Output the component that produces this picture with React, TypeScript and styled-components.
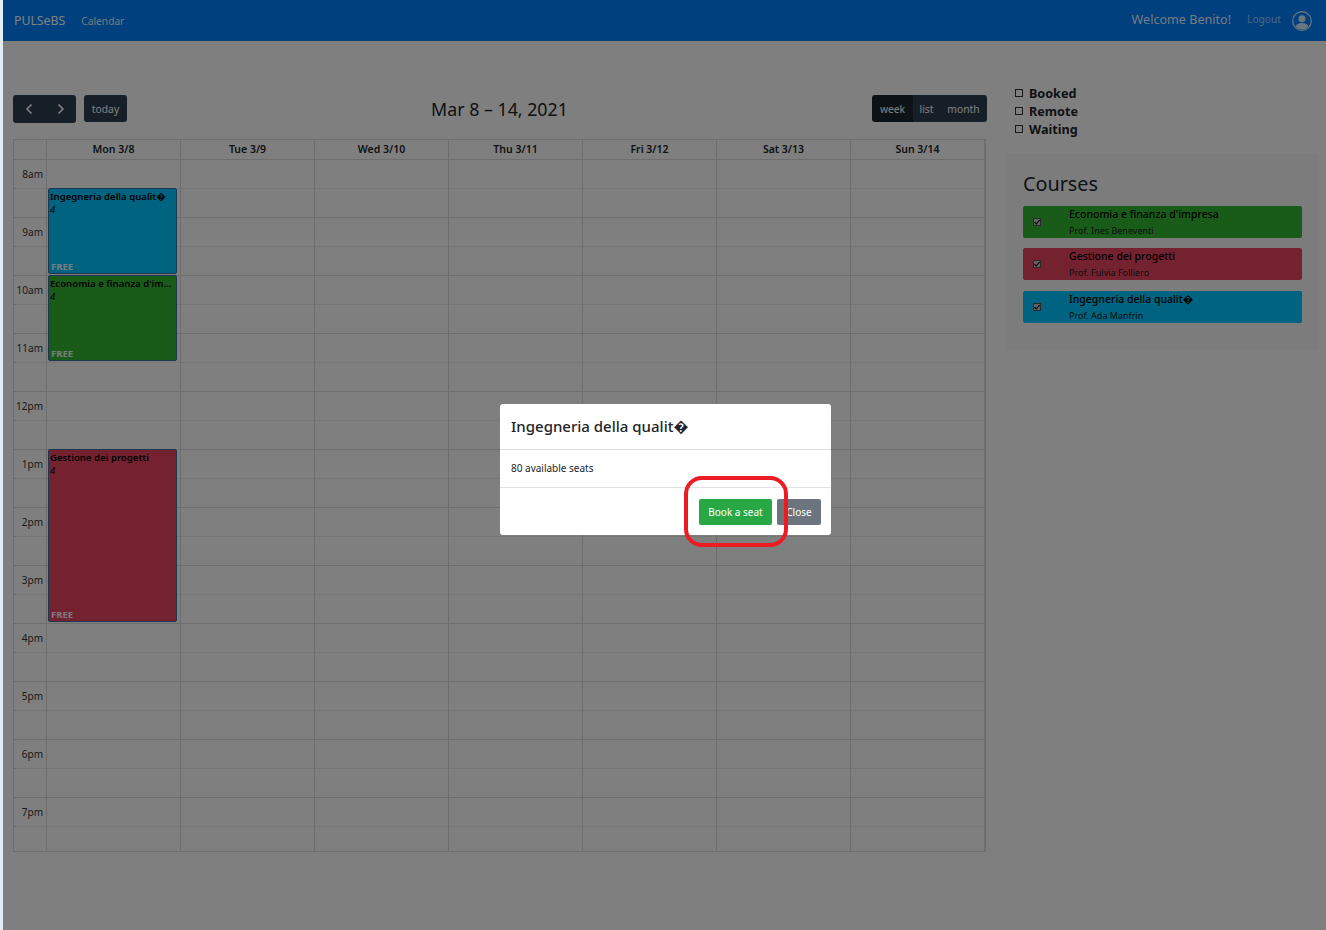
import React from "react";
import styled, { createGlobalStyle } from "styled-components";
import { ChevronLeft, ChevronRight } from "lucide-react";

const FONT = `"Noto Sans", "DejaVu Sans", sans-serif`;

const GlobalStyle = createGlobalStyle`
  html, body { margin: 0; padding: 0; height: 930px; overflow: hidden; }
  body { background: #e4edf6; font-family: ${FONT}; color: #212529; }
  * { box-sizing: border-box; }
`;

const Shell = styled.div`
  margin-left: 3px;
  height: 930px;
  background: #fff;
`;

const Navbar = styled.nav`
  height: 41px;
  background: #0080ff;
  display: flex;
  align-items: center;
  padding: 0 14px 0 11px;
`;

const Brand = styled.span`
  font-size: 12.3px;
  color: #fff;
  margin-right: 16px;
`;

const NavLink = styled.span`
  font-size: 10.2px;
  color: rgba(255, 255, 255, 0.95);
`;

const LogoutLink = styled(NavLink)`
  color: rgba(255, 255, 255, 0.6);
  margin-bottom: 3px;
`;

const NavRight = styled.div`
  margin-left: auto;
  display: flex;
  align-items: center;
`;

const Welcome = styled.span`
  font-size: 12.6px;
  color: rgba(255, 255, 255, 0.95);
  margin-right: 16px;
  margin-bottom: 2px;
`;

const Avatar = styled.svg`
  width: 20px;
  height: 20px;
  margin-left: 11px;
  display: block;
`;

const Main = styled.main`
  display: flex;
  padding: 54px 0 0 10px;
`;

const CalendarCol = styled.section`
  width: 973px;
`;

const Toolbar = styled.div`
  display: flex;
  justify-content: space-between;
  align-items: flex-start;
  margin-bottom: 16px;
  height: 28px;
`;

const ToolGroup = styled.div`
  display: flex;
  gap: 8px;
`;

const ButtonGroup = styled.div`
  display: flex;
  border-radius: 3px;
  overflow: hidden;
`;

const ViewGroup = styled(ButtonGroup)`
  margin-right: -1px;
`;

const ToolButton = styled.button<{ $active?: boolean; $w: number; $h?: number }>`
  width: ${(p) => p.$w}px;
  height: ${(p) => p.$h ?? 27}px;
  padding: 0;
  border: 0;
  border-radius: 0;
  background: ${(p) => (p.$active ? "#1a252f" : "#2c3e50")};
  color: #fff;
  font-family: ${FONT};
  font-size: 10.3px;
  display: flex;
  align-items: center;
  justify-content: center;
`;

const TodayButton = styled(ToolButton)`
  border-radius: 3px;
`;

const Title = styled.h2`
  margin: 1px 0 0;
  font-size: 17.8px;
  font-weight: 400;
  line-height: 26px;
  color: #212529;
`;

const Grid = styled.div`
  width: 973px;
  border: 1px solid #ddd;
  border-right-width: 2px;
`;

const HeaderRow = styled.div`
  display: grid;
  grid-template-columns: 32px repeat(7, 134px);
  height: 19px;
`;

const HeaderCell = styled.div`
  border-left: 1px solid #ddd;
  font-size: 10.5px;
  font-weight: 600;
  line-height: 19px;
  text-align: center;
  color: #212529;
  &:first-child { border-left: 0; }
`;

const TimeBody = styled.div`
  position: relative;
`;

const SlotRow = styled.div<{ $minor: boolean; $h: number }>`
  display: grid;
  grid-template-columns: 32px repeat(7, 134px);
  height: ${(p) => p.$h}px;
  border-top: 1px ${(p) => (p.$minor ? "dotted" : "solid")} #ddd;
`;

const AxisCell = styled.div`
  font-size: 10px;
  line-height: 29px;
  text-align: right;
  padding-right: 3px;
  color: #333;
`;

const DayCell = styled.div`
  border-left: 1px solid #ddd;
`;

const EventCard = styled.div<{ $color: string; $top: number; $h: number }>`
  position: absolute;
  left: 34px;
  top: ${(p) => p.$top}px;
  width: 129px;
  height: ${(p) => p.$h}px;
  background: ${(p) => p.$color};
  border: 1px solid #3a6ea5;
  border-radius: 2px;
  padding: 1px 1px 0 1px;
  color: #000;
  overflow: hidden;
`;

const EventName = styled.div`
  font-size: 9.6px;
  font-weight: 600;
  line-height: 13px;
  white-space: nowrap;
  overflow: hidden;
  text-overflow: ellipsis;
`;

const EventCount = styled.div`
  font-size: 9.5px;
  font-style: italic;
  line-height: 13px;
`;

const FreeTag = styled.span`
  position: absolute;
  left: 2px;
  bottom: 0;
  font-size: 9.5px;
  line-height: 12px;
  font-weight: 700;
  color: rgba(255, 255, 255, 0.95);
`;

const Sidebar = styled.aside`
  margin-left: 20px;
  width: 312px;
  margin-top: -16px;
`;

const Legend = styled.div`
  padding: 5px 0 0 9px;
  height: 74px;
`;

const LegendRow = styled.label`
  display: flex;
  align-items: center;
  gap: 6px;
  height: 18px;
  font-size: 12.6px;
  font-weight: 700;
  color: #212529;
`;

const Box = styled.span<{ $checked?: boolean }>`
  width: 8px;
  height: 8px;
  flex: none;
  border: 1px solid ${(p) => (p.$checked ? "#555" : "#333")};
  background: ${(p) => (p.$checked ? "#c4c4c4" : "#fff")};
  display: flex;
  align-items: center;
  justify-content: center;
`;

const CoursesPanel = styled.div`
  height: 197px;
  background: #f8f9fa;
  padding: 16px 17px 0;
`;

const CoursesTitle = styled.h3`
  margin: 0 0 8px;
  font-size: 19.8px;
  font-weight: 400;
  line-height: 29px;
  color: #212529;
`;

const CourseList = styled.div`
  display: flex;
  flex-direction: column;
`;

const CourseItem = styled.div<{ $color: string; $gap: number }>`
  height: 32px;
  width: 279px;
  margin-bottom: ${(p) => p.$gap}px;
  background: ${(p) => p.$color};
  border-radius: 2px;
  display: flex;
  align-items: center;
  padding-left: 10px;
`;

const CourseText = styled.div`
  margin-left: 28px;
  color: #000;
`;

const CourseName = styled.div`
  font-size: 10.5px;
  line-height: 14px;
  font-weight: 500;
`;

const CourseProf = styled.div`
  font-size: 9px;
  line-height: 12px;
  margin-top: 4px;
  color: #1a1a1a;
`;

const Backdrop = styled.div`
  position: fixed;
  left: 3px;
  top: 0;
  right: 0;
  bottom: 0;
  background: rgba(0, 0, 0, 0.5);
`;

const Modal = styled.div`
  position: fixed;
  left: 500px;
  top: 404px;
  width: 331px;
  height: 131px;
  background: #fff;
  border-radius: 3px;
  display: flex;
  flex-direction: column;
`;

const ModalHeader = styled.div`
  height: 46px;
  padding: 0 11px 2px;
  display: flex;
  align-items: center;
  border-bottom: 1px solid #dee2e6;
`;

const ModalTitle = styled.h4`
  margin: 0;
  font-size: 15px;
  font-weight: 500;
  color: #212529;
`;

const ModalBody = styled.div`
  height: 38px;
  padding: 0 11px 2px;
  display: flex;
  align-items: center;
  font-size: 10px;
  color: #212529;
  border-bottom: 1px solid #dee2e6;
`;

const ModalFooter = styled.div`
  flex: 1;
  display: flex;
  align-items: center;
  justify-content: flex-end;
  gap: 5px;
  padding: 0 10px;
`;

const ModalButton = styled.button<{ $kind: "book" | "close" }>`
  width: ${(p) => (p.$kind === "book" ? 73 : 44)}px;
  height: 26px;
  padding: 0;
  border: 0;
  border-radius: 2px;
  background: ${(p) => (p.$kind === "book" ? "#28a745" : "#6c757d")};
  color: #fff;
  font-family: ${FONT};
  font-size: 10px;
`;

const Highlight = styled.div`
  position: fixed;
  left: 684px;
  top: 476px;
  width: 104px;
  height: 71px;
  border: 4.5px solid #ed1c24;
  border-radius: 18px;
`;

const hours = ["8am", "9am", "10am", "11am", "12pm", "1pm", "2pm", "3pm", "4pm", "5pm", "6pm", "7pm"];
const days = ["Mon 3/8", "Tue 3/9", "Wed 3/10", "Thu 3/11", "Fri 3/12", "Sat 3/13", "Sun 3/14"];

const BLUE = "#00c6ff";
const GREEN = "#33b833";
const RED = "#ea4460";
const QUALITA = "Ingegneria della qualit\uFFFD";

const events = [
  { name: QUALITA, color: BLUE, top: 29, h: 86 },
  { name: "Economia e finanza d'impresa", color: GREEN, top: 116, h: 86 },
  { name: "Gestione dei progetti", color: RED, top: 290, h: 173 },
];

const courses = [
  { name: "Economia e finanza d'impresa", prof: "Prof. Ines Beneventi", color: GREEN, gap: 10 },
  { name: "Gestione dei progetti", prof: "Prof. Fulvia Folliero", color: RED, gap: 11 },
  { name: QUALITA, prof: "Prof. Ada Manfrin", color: BLUE, gap: 0 },
];

const slots = hours.flatMap((label, i) => [
  { label, minor: false, h: 29 },
  { label: "", minor: true, h: i === hours.length - 1 ? 25 : 29 },
]);

export default function App() {
  return (
    <>
      <GlobalStyle />
      <Shell>
        <Navbar>
          <Brand>PULSeBS</Brand>
          <NavLink>Calendar</NavLink>
          <NavRight>
            <Welcome>Welcome Benito!</Welcome>
            <LogoutLink>Logout</LogoutLink>
            <Avatar viewBox="0 0 20 20">
              <defs>
                <clipPath id="avatar-clip">
                  <circle cx="10" cy="10" r="8.6" />
                </clipPath>
              </defs>
              <circle cx="10" cy="10" r="9.3" fill="none" stroke="#fff" strokeOpacity=".85" strokeWidth="1.2" />
              <circle cx="10" cy="7.8" r="3.5" fill="#fff" fillOpacity=".85" />
              <ellipse cx="10" cy="16.6" rx="6.6" ry="4.6" fill="#fff" fillOpacity=".85" clipPath="url(#avatar-clip)" />
            </Avatar>
          </NavRight>
        </Navbar>
        <Main>
          <CalendarCol>
            <Toolbar>
              <ToolGroup>
                <ButtonGroup>
                  <ToolButton $w={32} $h={28}><ChevronLeft size={16} strokeWidth={2.6} /></ToolButton>
                  <ToolButton $w={31} $h={28}><ChevronRight size={16} strokeWidth={2.6} /></ToolButton>
                </ButtonGroup>
                <TodayButton $w={43}>today</TodayButton>
              </ToolGroup>
              <Title>Mar 8 – 14, 2021</Title>
              <ViewGroup>
                <ToolButton $active $w={41}>week</ToolButton>
                <ToolButton $w={27}>list</ToolButton>
                <ToolButton $w={47}>month</ToolButton>
              </ViewGroup>
            </Toolbar>
            <Grid>
              <HeaderRow>
                <HeaderCell />
                {days.map((d) => <HeaderCell key={d}>{d}</HeaderCell>)}
              </HeaderRow>
              <TimeBody>
                {slots.map((s, i) => (
                  <SlotRow key={i} $minor={s.minor} $h={s.h}>
                    <AxisCell>{s.label}</AxisCell>
                    {days.map((d) => <DayCell key={d} />)}
                  </SlotRow>
                ))}
                {events.map((e) => (
                  <EventCard key={e.name} $color={e.color} $top={e.top} $h={e.h}>
                    <EventName>{e.name}</EventName>
                    <EventCount>4</EventCount>
                    <FreeTag>FREE</FreeTag>
                  </EventCard>
                ))}
              </TimeBody>
            </Grid>
          </CalendarCol>
          <Sidebar>
            <Legend>
              <LegendRow><Box />Booked</LegendRow>
              <LegendRow><Box />Remote</LegendRow>
              <LegendRow><Box />Waiting</LegendRow>
            </Legend>
            <CoursesPanel>
              <CoursesTitle>Courses</CoursesTitle>
              <CourseList>
                {courses.map((c) => (
                  <CourseItem key={c.name} $color={c.color} $gap={c.gap}>
                    <Box $checked>
                      <svg width="6" height="6" viewBox="0 0 6 6">
                        <path d="M.5 3.2 2.2 5 5.6 1" fill="none" stroke="#000" strokeWidth="1.1" />
                      </svg>
                    </Box>
                    <CourseText>
                      <CourseName>{c.name}</CourseName>
                      <CourseProf>{c.prof}</CourseProf>
                    </CourseText>
                  </CourseItem>
                ))}
              </CourseList>
            </CoursesPanel>
          </Sidebar>
        </Main>
      </Shell>
      <Backdrop />
      <Modal>
        <ModalHeader>
          <ModalTitle>{QUALITA}</ModalTitle>
        </ModalHeader>
        <ModalBody>80 available seats</ModalBody>
        <ModalFooter>
          <ModalButton $kind="book">Book a seat</ModalButton>
          <ModalButton $kind="close">Close</ModalButton>
        </ModalFooter>
      </Modal>
      <Highlight />
    </>
  );
}
